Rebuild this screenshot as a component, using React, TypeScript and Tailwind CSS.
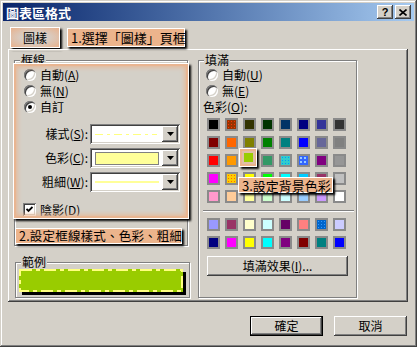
import React from "react";

const raised =
  "shadow-[inset_-1px_-1px_#404040,inset_1px_1px_#ffffff,inset_-2px_-2px_#808080,inset_2px_2px_#d4d0c8]";
const sunken =
  "shadow-[inset_1px_1px_#808080,inset_-1px_-1px_#ffffff,inset_2px_2px_#404040,inset_-2px_-2px_#d4d0c8]";
const note =
  "absolute bg-[#ecb48c] border border-white shadow-[2px_2px_2px_#000] text-black flex items-center whitespace-nowrap leading-none";

const topColors = [
  [
    "bg-[#000000]",
    "bg-[#993300] bg-[radial-gradient(circle,#ff3300_1px,transparent_1px)] bg-[length:3px_3px]",
    "bg-[#333300]",
    "bg-[#003300]",
    "bg-[#003366]",
    "bg-[#000080]",
    "bg-[#333399]",
    "bg-[#333333]",
  ],
  [
    "bg-[#800000]",
    "bg-[#ff6600]",
    "bg-[#808000]",
    "bg-[#008000]",
    "bg-[#008080]",
    "bg-[#0000ff]",
    "bg-[#666699]",
    "bg-[#808080]",
  ],
  [
    "bg-[#ff0000]",
    "bg-[#ff9900]",
    "bg-[#99cc00]",
    "bg-[#339966]",
    "bg-[#33cccc] bg-[radial-gradient(circle,#0099ff_1px,transparent_1px)] bg-[length:3px_3px]",
    "bg-[#3366ff] bg-[radial-gradient(circle,#99ccff_0.8px,transparent_1px)] bg-[length:4px_4px]",
    "bg-[#800080]",
    "bg-[#969696]",
  ],
  [
    "bg-[#ff00ff]",
    "bg-[#ffcc00] bg-[radial-gradient(circle,#ff6600_1px,transparent_1px)] bg-[length:3px_3px]",
    "bg-[#ffff00]",
    "bg-[#00ff00]",
    "bg-[#00ffff]",
    "bg-[#00ccff]",
    "bg-[#993366]",
    "bg-[#c0c0c0]",
  ],
  [
    "bg-[#ff99cc]",
    "bg-[#ffcc99]",
    "bg-[#ffff99]",
    "bg-[#ccffcc]",
    "bg-[#ccffff]",
    "bg-[#99ccff]",
    "bg-[#cc99ff]",
    "bg-[#ffffff]",
  ],
];

const bottomColors = [
  [
    "bg-[#9999ff]",
    "bg-[#993366]",
    "bg-[#ffffcc]",
    "bg-[#ccffff]",
    "bg-[#660066]",
    "bg-[#ff8080]",
    "bg-[#0066cc] bg-[radial-gradient(circle,#3399ff_1px,transparent_1px)] bg-[length:3px_3px]",
    "bg-[#ccccff]",
  ],
  [
    "bg-[#000080]",
    "bg-[#ff00ff]",
    "bg-[#ffff00]",
    "bg-[#00ffff]",
    "bg-[#800080]",
    "bg-[#800000]",
    "bg-[#008080]",
    "bg-[#0000ff]",
  ],
];

const Group = ({
  label,
  className,
  children,
}: {
  label: string;
  className: string;
  children?: React.ReactNode;
}) => (
  <div
    className={`relative border border-[#808080] shadow-[inset_1px_1px_#ffffff,1px_1px_#ffffff] ${className}`}
  >
    <span className="absolute -top-[8px] left-[5px] bg-[#d4d0c8] px-[1px] text-[12px] leading-[14px]">
      {label}
    </span>
    {children}
  </div>
);

const Radio = ({ checked }: { checked?: boolean }) => (
  <span className="relative w-[12px] h-[12px] rounded-full bg-white shrink-0 shadow-[inset_1px_1px_#808080,inset_2px_2px_#404040,inset_-1px_-1px_#ffffff,inset_-2px_-2px_#d4d0c8] flex items-center justify-center">
    {checked && <span className="w-[4px] h-[4px] rounded-full bg-black" />}
  </span>
);

const Combo = ({ children }: { children: React.ReactNode }) => (
  <div className={`w-[90px] h-[20px] bg-white ${sunken} flex items-center p-[2px]`}>
    <div className="flex-1 h-full flex items-center px-[3px]">{children}</div>
    <div className={`w-[16px] h-[16px] bg-[#d4d0c8] ${raised} flex items-center justify-center`}>
      <svg width="7" height="4" viewBox="0 0 7 4">
        <path d="M0 0h7L3.5 4z" fill="#000" />
      </svg>
    </div>
  </div>
);

const Cell = ({ c }: { c: string }) => (
  <div className={`w-[13px] h-[13px] border-2 border-[#8a8a8a] ${c}`} />
);

export default function App() {
  return (
    <div className="relative w-[417px] h-[347px] bg-[#d4d0c8] p-[3px] flex flex-col text-black font-['Noto_Sans_CJK_TC','Liberation_Sans',sans-serif] shadow-[inset_-1px_-1px_#404040,inset_1px_1px_#d4d0c8,inset_-2px_-2px_#808080,inset_2px_2px_#ffffff]">
      {/* title bar */}
      <div className="h-[18px] shrink-0 bg-gradient-to-r from-[#0a246a] to-[#a6caf0] flex items-center pl-[3px] pr-[3px]">
        <span className="text-white font-bold text-[13px] leading-none">圖表區格式</span>
        <div className="ml-auto flex gap-[2px]">
          <div className={`w-[16px] h-[14px] bg-[#d4d0c8] ${raised} flex items-center justify-center`}>
            <span className="text-[11px] font-bold leading-none font-['Liberation_Sans',sans-serif]">?</span>
          </div>
          <div className={`w-[16px] h-[14px] bg-[#d4d0c8] ${raised} flex items-center justify-center`}>
            <svg width="8" height="7" viewBox="0 0 8 7">
              <path d="M0.5 0.5l7 6M7.5 0.5l-7 6" stroke="#000" strokeWidth="1.6" />
            </svg>
          </div>
        </div>
      </div>

      {/* tabs */}
      <div className="h-[28px] shrink-0 flex items-end pl-[7px]">
        <div className="mb-[1px] w-[50px] h-[21px] flex items-center justify-center text-[12px] border border-white bg-[radial-gradient(ellipse_at_center,#d7cfc8_35%,#e9b18c_100%)] shadow-[2px_2px_2px_#000]">
          圖樣
        </div>
      </div>

      {/* tab panel */}
      <div className={`ml-[5px] w-[400px] h-[253px] shrink-0 ${raised} flex pt-[11px] pl-[6px] text-[12px] leading-[14px]`}>
        <div className="w-[176px] flex flex-col">
          <Group label="框線" className="w-[174px] h-[186px] flex flex-col">
            <div className="pt-[6px] pl-[9px] flex flex-col">
              <div className="h-[16px] flex items-center gap-[4px]">
                <Radio />
                <span>自動(<u>A</u>)</span>
              </div>
              <div className="h-[16px] flex items-center gap-[4px]">
                <Radio />
                <span>無(<u>N</u>)</span>
              </div>
              <div className="h-[16px] flex items-center gap-[4px]">
                <Radio checked />
                <span>自訂</span>
              </div>
            </div>
            <div className="mt-[9px] pl-[7px] flex flex-col gap-[4px]">
              <div className="h-[20px] flex items-center gap-[2px]">
                <span className="w-[66px] text-right">樣式(<u>S</u>):</span>
                <Combo>
                  <svg width="62" height="3" viewBox="0 0 62 3">
                    <line x1="0" y1="1.5" x2="62" y2="1.5" stroke="#ffff80" strokeWidth="1" strokeDasharray="8 4 3 4" />
                  </svg>
                </Combo>
              </div>
              <div className="h-[20px] flex items-center gap-[2px]">
                <span className="w-[66px] text-right">色彩(<u>C</u>):</span>
                <Combo>
                  <div className="w-full h-[13px] bg-[#ffff99] border border-[#808080]" />
                </Combo>
              </div>
              <div className="h-[20px] flex items-center gap-[2px]">
                <span className="w-[66px] text-right">粗細(<u>W</u>):</span>
                <Combo>
                  <div className="w-full h-[2px] bg-[#ffff99]" />
                </Combo>
              </div>
            </div>
            <div className="mt-[11px] pl-[8px] h-[13px] flex items-center gap-[4px]">
              <div className={`w-[13px] h-[13px] bg-white ${sunken} flex items-center justify-center`}>
                <svg width="7" height="7" viewBox="0 0 7 7">
                  <path d="M0.5 3l2 2 4-4" stroke="#000" strokeWidth="1.8" fill="none" />
                </svg>
              </div>
              <span>陰影(<u>D</u>)</span>
            </div>
          </Group>

          <Group label="範例" className="ml-[1px] mt-[16px] w-[175px] h-[36px]">
            <div className="ml-[3px] mt-[6px]">
              <svg width="167" height="26" viewBox="0 0 167 26">
                <rect x="3" y="3" width="164" height="23" fill="#000" />
                <rect x="0" y="0" width="164" height="23" fill="#99cc00" />
                <rect
                  x="1"
                  y="1"
                  width="162"
                  height="21"
                  fill="none"
                  stroke="#ffff80"
                  strokeWidth="2"
                  strokeDasharray="12 4 4 4"
                />
              </svg>
            </div>
          </Group>
        </div>

        <Group label="填滿" className="ml-[8px] w-[159px] h-[238px] flex flex-col">
          <div className="pt-[6px] pl-[7px] flex flex-col">
            <div className="h-[16px] flex items-center gap-[4px]">
              <Radio />
              <span>自動(<u>U</u>)</span>
            </div>
            <div className="h-[16px] flex items-center gap-[4px]">
              <Radio />
              <span>無(<u>E</u>)</span>
            </div>
          </div>
          <div className="pl-[4px] h-[15px] flex items-center">色彩(<u>O</u>):</div>
          <div className="mt-[4px] pl-[8px] grid grid-cols-[repeat(8,13px)] gap-[5px]">
            {topColors.flat().map((c, i) => (
              <Cell key={i} c={c} />
            ))}
          </div>
          <div className="mt-[7px] ml-[4px] mr-[2px] h-[2px] border-t border-[#808080] border-b border-b-white" />
          <div className="mt-[6px] pl-[8px] grid grid-cols-[repeat(8,13px)] gap-[5px]">
            {bottomColors.flat().map((c, i) => (
              <Cell key={i} c={c} />
            ))}
          </div>
          <div className={`mt-[7px] ml-[8px] w-[141px] h-[20px] ${raised} flex items-center justify-center`}>
            填滿效果(<u>I</u>)...
          </div>
        </Group>
      </div>

      {/* dialog buttons */}
      <div className="mt-[14px] flex justify-end gap-[11px] pr-[7px] text-[12px]">
        <div className="w-[73px] h-[20px] border border-black flex">
          <div className={`flex-1 ${raised} flex items-center justify-center`}>確定</div>
        </div>
        <div className={`w-[73px] h-[20px] ${raised} flex items-center justify-center`}>取消</div>
      </div>

      {/* annotations */}
      <div className={`${note} left-[67px] top-[28px] w-[118px] h-[19px] pl-[3px] text-[13px]`}>
        1.選擇「圖樣」頁框
      </div>
      <div className="absolute left-[13px] top-[63px] w-[176px] h-[156px] border border-white shadow-[inset_0_0_0_2px_#e9b591,inset_0_0_5px_3px_#e9b591,2px_2px_2px_#000]" />
      <div className={`${note} left-[15px] top-[228px] w-[167px] h-[16px] pl-[3px] text-[12.5px] tracking-[0.2px]`}>
        2.設定框線樣式、色彩、粗細
      </div>
      <div className="absolute left-[239px] top-[148px] w-[18px] h-[19px] border border-white bg-[#ecb48c] shadow-[2px_2px_2px_#000] flex items-center justify-center">
        <div className="w-[13px] h-[13px] border-2 border-[#e0c0a8] bg-[#99cc00]" />
      </div>
      <div className={`${note} left-[238px] top-[177px] w-[95px] h-[16px] pl-[3px] text-[13px]`}>
        3.設定背景色彩
      </div>
    </div>
  );
}
